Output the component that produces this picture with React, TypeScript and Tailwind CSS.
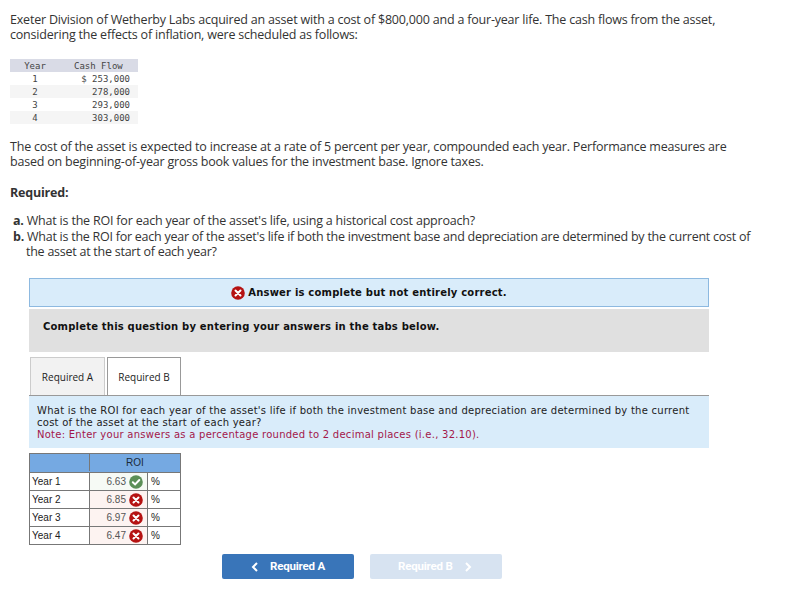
const body = { fontFamily: '"Open Sans", sans-serif' };

const Cross = () => (
  <svg width="14" height="14" viewBox="0 0 14 14" className="shrink-0">
    <circle cx="7" cy="7" r="6.8" fill="#b51212" />
    <path d="M4.5 4.5l5 5M9.5 4.5l-5 5" stroke="#fff" strokeWidth="2" strokeLinecap="round" />
  </svg>
);

const Check = () => (
  <svg width="14" height="14" viewBox="0 0 14 14" className="shrink-0">
    <circle cx="7" cy="7" r="6.8" fill="#5b8f57" />
    <path d="M3.8 7.2l2.3 2.2 4.2-4.4" stroke="#fff" strokeWidth="2" fill="none" strokeLinecap="round" />
  </svg>
);

const App = () => {
  const cash = [
    { year: "1", flow: "$ 253,000", bg: "bg-white" },
    { year: "2", flow: "278,000", bg: "bg-[#f5f5f5]" },
    { year: "3", flow: "293,000", bg: "bg-white" },
    { year: "4", flow: "303,000", bg: "bg-[#f5f5f5]" },
  ];
  const roi = [
    { year: "Year 1", value: "6.63", ok: true },
    { year: "Year 2", value: "6.85", ok: false },
    { year: "Year 3", value: "6.97", ok: false },
    { year: "Year 4", value: "6.47", ok: false },
  ];

  return (
    <div className="w-[807px] h-[604px] bg-white overflow-hidden pt-[12px] text-[#333]">
      <div className="pl-[10px] text-[12.5px] leading-[15px] tracking-[-0.2px]" style={body}>
        <p className="w-[730px]">
          Exeter Division of Wetherby Labs acquired an asset with a cost of $800,000 and a four-year life. The cash flows from the asset, considering the effects of inflation, were scheduled as follows:
        </p>
      </div>

      <div className="ml-[10px] mt-[17px] w-[128px] font-['DejaVu_Sans_Mono',monospace] text-[9px] leading-[14px] text-[#444]">
        <div className="flex h-[13px] bg-[#d9dbe6]">
          <span className="w-[50px] text-center">Year</span>
          <span className="w-[78px] whitespace-nowrap pl-[14px]">Cash Flow</span>
        </div>
        {cash.map((row) => (
          <div key={row.year} className={`flex h-[13px] ${row.bg}`}>
            <span className="w-[50px] text-center">{row.year}</span>
            <span className="w-[70px] text-right">{row.flow}</span>
          </div>
        ))}
      </div>

      <div className="pl-[10px] mt-[15px] text-[12.5px] leading-[15px] tracking-[-0.2px]" style={body}>
        <p className="w-[730px]">
          The cost of the asset is expected to increase at a rate of 5 percent per year, compounded each year. Performance measures are based on beginning-of-year gross book values for the investment base. Ignore taxes.
        </p>
        <p className="mt-[16px] font-bold">Required:</p>
        <div className="mt-[13px] pl-[3px] w-[755px]">
          <p><b>a.</b> What is the ROI for each year of the asset's life, using a historical cost approach?</p>
          <p className="pl-[13px] -indent-[13px] mt-[1px] tracking-[-0.25px]"><b>b.</b> What is the ROI for each year of the asset's life if both the investment base and depreciation are determined by the current cost of the asset at the start of each year?</p>
        </div>
      </div>

      <div className="ml-[29px] mt-[19px] w-[680px] font-['DejaVu_Sans',sans-serif]">
        <div className="flex h-[29px] items-center justify-center gap-[3px] border border-[#8db9e0] bg-[#d9ecfa] text-[10px] font-bold text-[#111]">
          <Cross />
          <span className="tracking-[0.2px]">Answer is complete but not entirely correct.</span>
        </div>
        <div className="mt-[2px] h-[43px] bg-[#e0e0e0] pl-[14px] pt-[11px] text-[10px] leading-[13px] font-bold text-[#111] tracking-[0.2px]">
          Complete this question by entering your answers in the tabs below.
        </div>

        <div className="mt-[5px] flex h-[38px] gap-[2px] pl-[1px] font-['Open_Sans',sans-serif] text-[10px] text-[#222]">
          <div className="flex w-[75px] items-center justify-center border border-b-0 border-[#ccc] bg-[#f2f2f2] pt-[2px]">Required A</div>
          <div className="flex w-[74px] items-center justify-center border border-b-0 border-[#999] bg-white pt-[2px]">Required B</div>
        </div>
        <div className="h-[53px] border-t border-[#999] bg-[#d9ecfa] pl-[8px] pr-[8px] pt-[9px] text-[10px] leading-[12.2px] text-[#222] tracking-[0.26px]">
          <p>What is the ROI for each year of the asset's life if both the investment base and depreciation are determined by the current cost of the asset at the start of each year?</p>
          <p className="text-[#a3174a]">Note: Enter your answers as a percentage rounded to 2 decimal places (i.e., 32.10).</p>
        </div>

        <div className="mt-[5px] w-[152px] border border-[#777] font-['Liberation_Sans',sans-serif] text-[10px] text-[#222]">
          <div className="flex h-[17px] box-content pb-[1px] bg-[#75a9e2]">
            <div className="w-[60px] border-r border-[#777]" />
            <div className="flex-1 text-center leading-[18px] text-[#1a2a3a]">ROI</div>
          </div>
          {roi.map((row) => (
            <div key={row.year} className="flex h-[18px] border-t border-[#777]">
              <div className="w-[60px] border-r border-[#777] pl-[2px] leading-[17px]">{row.year}</div>
              <div className={`flex w-[58px] items-center justify-end gap-[3px] border-r border-[#777] pr-[4px] text-[#555] ${row.ok ? "bg-[#f6faf5]" : "bg-[#fdf3f1]"}`}>
                <span>{row.value}</span>
                {row.ok ? <Check /> : <Cross />}
              </div>
              <div className="flex-1 pl-[3px] leading-[17px]">%</div>
            </div>
          ))}
        </div>
      </div>

      <div className="ml-[222px] mt-[9px] flex gap-[16px] font-['Roboto',sans-serif] text-[11.5px] font-bold tracking-[-0.2px] text-white">
        <div className="flex h-[25px] w-[132px] items-center rounded-[2px] bg-[#3975b9] pl-[29px]">
          <svg width="8" height="10" viewBox="0 0 8 10" className="mr-[11px]"><path d="M6 1L2 5l4 4" stroke="#fff" strokeWidth="2" fill="none" /></svg>
          Required A
        </div>
        <div className="flex h-[25px] w-[132px] items-center rounded-[2px] bg-[#d7e3f1] pl-[28px]">
          Required B
          <svg width="8" height="10" viewBox="0 0 8 10" className="ml-[11px]"><path d="M2 1l4 4-4 4" stroke="#fff" strokeWidth="2" fill="none" /></svg>
        </div>
      </div>
    </div>
  );
};

export default App;
